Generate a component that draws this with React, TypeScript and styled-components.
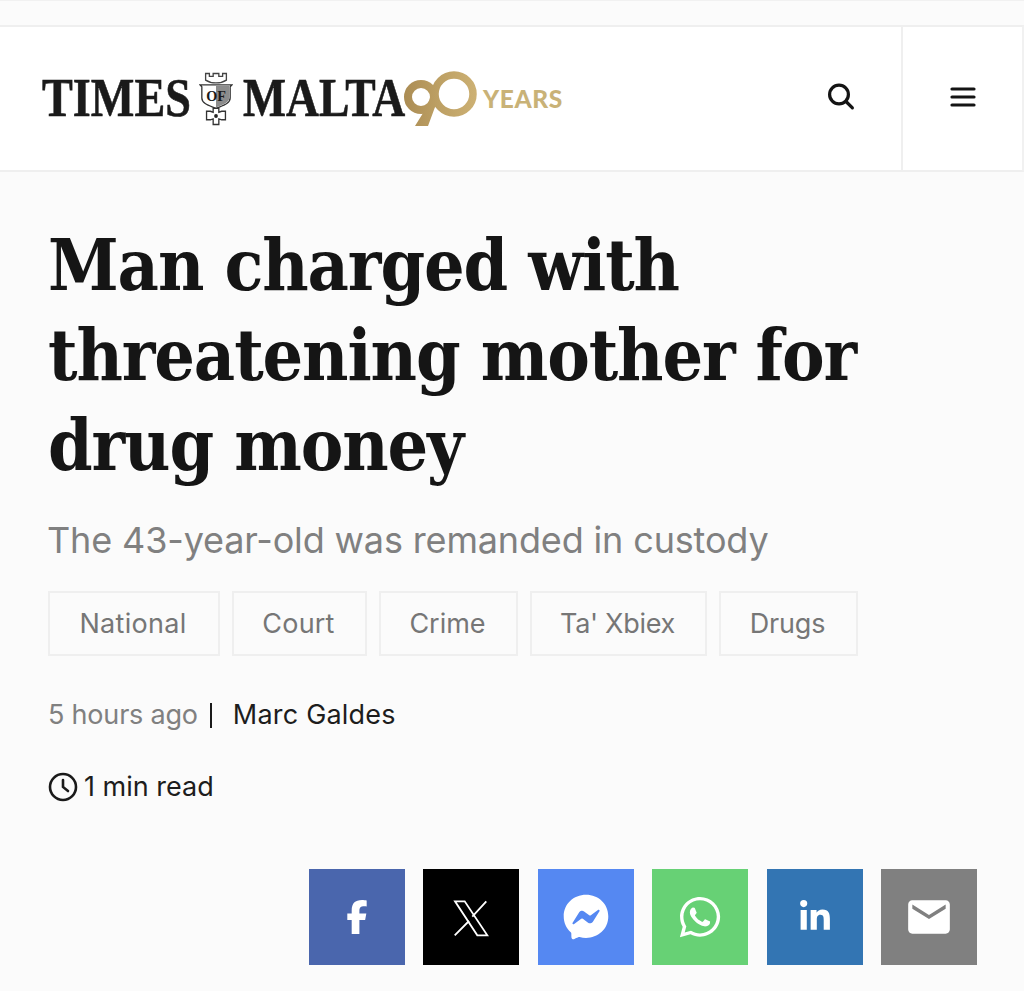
import React from "react";
import styled, { createGlobalStyle } from "styled-components";
import { FaFacebookF, FaFacebookMessenger, FaWhatsapp, FaLinkedinIn } from "react-icons/fa6";
import { MdEmail } from "react-icons/md";

const Global = createGlobalStyle`
  html, body { margin: 0; padding: 0; background: #fbfbfb; }
  body { font-family: Inter, "Liberation Sans", sans-serif; width: 1024px; height: 991px; overflow: hidden; }
`;
const Page = styled.div`display: flex; flex-direction: column; width: 1024px; height: 991px; background: #fbfbfb;`;
const TopStrip = styled.div`height: 24px; border-top: 1px solid #f1f1f1;`;
const Header = styled.header`
  display: flex; height: 143px; background: #fff;
  border-top: 2px solid #efefef; border-bottom: 2px solid #efefef; border-right: 2px solid #f1f1f1;
`;
const Logo = styled.div`flex: 1; display: flex; align-items: center; padding-left: 42px;`;
const WordBox = styled.span`width: ${p => p.$w}px; flex: none; display: block;`;
const Word = styled.span`
  display: inline-block; font: 700 55px/1 "Liberation Serif", serif; color: #1a1a1a; -webkit-text-stroke: .6px #1a1a1a;
  transform-origin: left center; transform: translateY(-1px) scaleX(${p => p.$sx}); white-space: nowrap;
`;
const Crest = styled.svg`width: 34px; height: 56px; margin: 0 10px 0 9px; flex: none;`;
const Ninety = styled.svg`width: 78px; height: 60px; margin-left: -8px; flex: none;`;
const Years = styled.span`font: 900 24.5px/1 Lato, "Open Sans", sans-serif; color: #c9b277; letter-spacing: .6px; margin-left: 5px; transform: translateY(1px);`;
const Cell = styled.div`
  width: ${p => p.$w}px; display: flex; align-items: center; justify-content: center; padding-bottom: 4px; box-sizing: border-box;
  border-left: ${p => (p.$divider ? "2px solid #efefef" : "none")}; flex: none;
`;
const Main = styled.main`display: flex; flex-direction: column; padding: 48px 47px 0 48px;`;
const Title = styled.h1`
  margin: 0; font: 700 71px/90px "DejaVu Serif", serif; font-stretch: condensed; color: #151515; width: 900px; letter-spacing: -1.1px;
`;
const Sub = styled.p`margin: 26px 0 0 -1px; font: 400 36px/48px Inter, sans-serif; color: #808080; letter-spacing: -.15px;`;
const Tags = styled.div`display: flex; gap: 12px; margin-top: 27px;`;
const Tag = styled.span`
  width: ${p => p.$w}px; height: 65px; box-sizing: border-box; display: flex; align-items: center; justify-content: center; padding-right: 2px;
  border: 2px solid #efefef; font: 400 27px/1 Inter, sans-serif; color: #767676; letter-spacing: ${p => p.$ls}px;
`;
const Meta = styled.div`display: flex; align-items: center; margin-top: 41px; height: 36px; font: 400 27px/36px Inter, sans-serif; letter-spacing: -.2px; color: #808080;`;
const Sep = styled.span`width: 2px; height: 25px; background: #1a1a1a; margin: 0 21px 0 12px;`;
const Author = styled.span`color: #1d1d1d; letter-spacing: .2px;`;
const Read = styled.div`display: flex; align-items: center; gap: 6px; margin-top: 36px; height: 36px; font: 400 27px/36px Inter, sans-serif; color: #1d1d1d;`;
const Share = styled.div`display: flex; justify-content: flex-end; gap: 18.4px; margin-top: 64px;`;
const ShareBtn = styled.a`width: 96px; height: 96px; display: flex; align-items: center; justify-content: center; color: #fff; background: ${p => p.$bg};`;

const TAGS = [
  { t: "National", w: 172, ls: 0.3 },
  { t: "Court", w: 135, ls: 0.2 },
  { t: "Crime", w: 139, ls: 0 },
  { t: "Ta' Xbiex", w: 177, ls: -0.3 },
  { t: "Drugs", w: 139, ls: -0.2 },
];

export default function App() {
  return (
    <Page>
      <Global />
      <TopStrip />
      <Header>
        <Logo>
          <WordBox $w={148}><Word $sx={0.84}>TIMES</Word></WordBox>
          <Crest viewBox="0 0 36 56">
            <path d="M7 8V1h4v3h4V1h6v3h4V1h4v7c-3 2-5 3-11 3S10 10 7 8z" fill="#fff" stroke="#444" strokeWidth="1.4" />
            <path d="M1 13h34l-2 2v12c0 6-8 8-15 11C11 35 3 33 3 27V15z" fill="#fff" stroke="#333" strokeWidth="1.4" />
            <path d="M18 14h14v13c0 5-7 7-14 10z" fill="#8c8c8c" />
            <text x="18" y="30" textAnchor="middle" fontFamily="Liberation Serif" fontWeight="700" fontSize="15" fill="#1a1a1a">OF</text>
            <path d="M15 38h6v4l3-1 4 0v9h-4l-3-1v6h-6v-6l-3 1H8v-9h4l3 1z" fill="#fff" stroke="#333" strokeWidth="1.4" />
            <circle cx="18" cy="46" r="2" fill="#222" />
          </Crest>
          <WordBox $w={165}><Word $sx={0.83}>MALTA</Word></WordBox>
          <Ninety viewBox="0 0 78 60">
            <defs>
              <linearGradient id="gold" x1="0" y1="0" x2="78" y2="0" gradientUnits="userSpaceOnUse">
                <stop offset="0" stopColor="#a98a52" />
                <stop offset="0.5" stopColor="#bda064" />
                <stop offset="1" stopColor="#cdb174" />
              </linearGradient>
            </defs>
            <circle cx="21" cy="28" r="13" fill="none" stroke="url(#gold)" strokeWidth="8" />
            <path d="M15 57 L28 36 L31 26 L38 30 L28 57z" fill="url(#gold)" />
            <circle cx="54" cy="25" r="19" fill="none" stroke="url(#gold)" strokeWidth="7.5" />
          </Ninety>
          <Years>YEARS</Years>
        </Logo>
        <Cell $w={120}>
          <svg width="30" height="30" viewBox="0 0 30 30" fill="none" stroke="#141414" strokeWidth="3.2" strokeLinecap="round">
            <circle cx="13" cy="12.5" r="9.4" />
            <path d="M20 19.5l6.4 6.4" />
          </svg>
        </Cell>
        <Cell $w={121} $divider>
          <svg width="26" height="22" viewBox="0 0 26 22" fill="none" stroke="#141414" strokeWidth="3.2" strokeLinecap="round">
            <path d="M2 3h22M2 11h22M2 19h22" />
          </svg>
        </Cell>
      </Header>
      <Main>
        <Title>Man charged with threatening mother for drug money</Title>
        <Sub>The 43-year-old was remanded in custody</Sub>
        <Tags>
          {TAGS.map(x => <Tag key={x.t} $w={x.w} $ls={x.ls}>{x.t}</Tag>)}
        </Tags>
        <Meta>5 hours ago<Sep /><Author>Marc Galdes</Author></Meta>
        <Read>
          <svg width="30" height="30" viewBox="0 0 30 30" fill="none" stroke="#1a1a1a" strokeWidth="2.6" strokeLinecap="round">
            <circle cx="15" cy="15" r="13" />
            <path d="M15 8v7l5 4" />
          </svg>
          1 min read
        </Read>
        <Share>
          <ShareBtn $bg="#4a66ad"><FaFacebookF size={34} /></ShareBtn>
          <ShareBtn $bg="#000">
            <svg width="96" height="96" viewBox="0 0 96 96" fill="none" stroke="#fff" strokeWidth="1.8">
              <path d="M32 32.3h9.7l22.6 34h-10z" />
              <path d="M63.3 32.3L49.3 47.7M46 52L31.7 66.3" />
            </svg>
          </ShareBtn>
          <ShareBtn $bg="#5588f2"><FaFacebookMessenger size={46} /></ShareBtn>
          <ShareBtn $bg="#67d175"><FaWhatsapp size={46} /></ShareBtn>
          <ShareBtn $bg="#3375b3"><FaLinkedinIn size={34} /></ShareBtn>
          <ShareBtn $bg="#808080"><MdEmail size={50} /></ShareBtn>
        </Share>
      </Main>
    </Page>
  );
}
